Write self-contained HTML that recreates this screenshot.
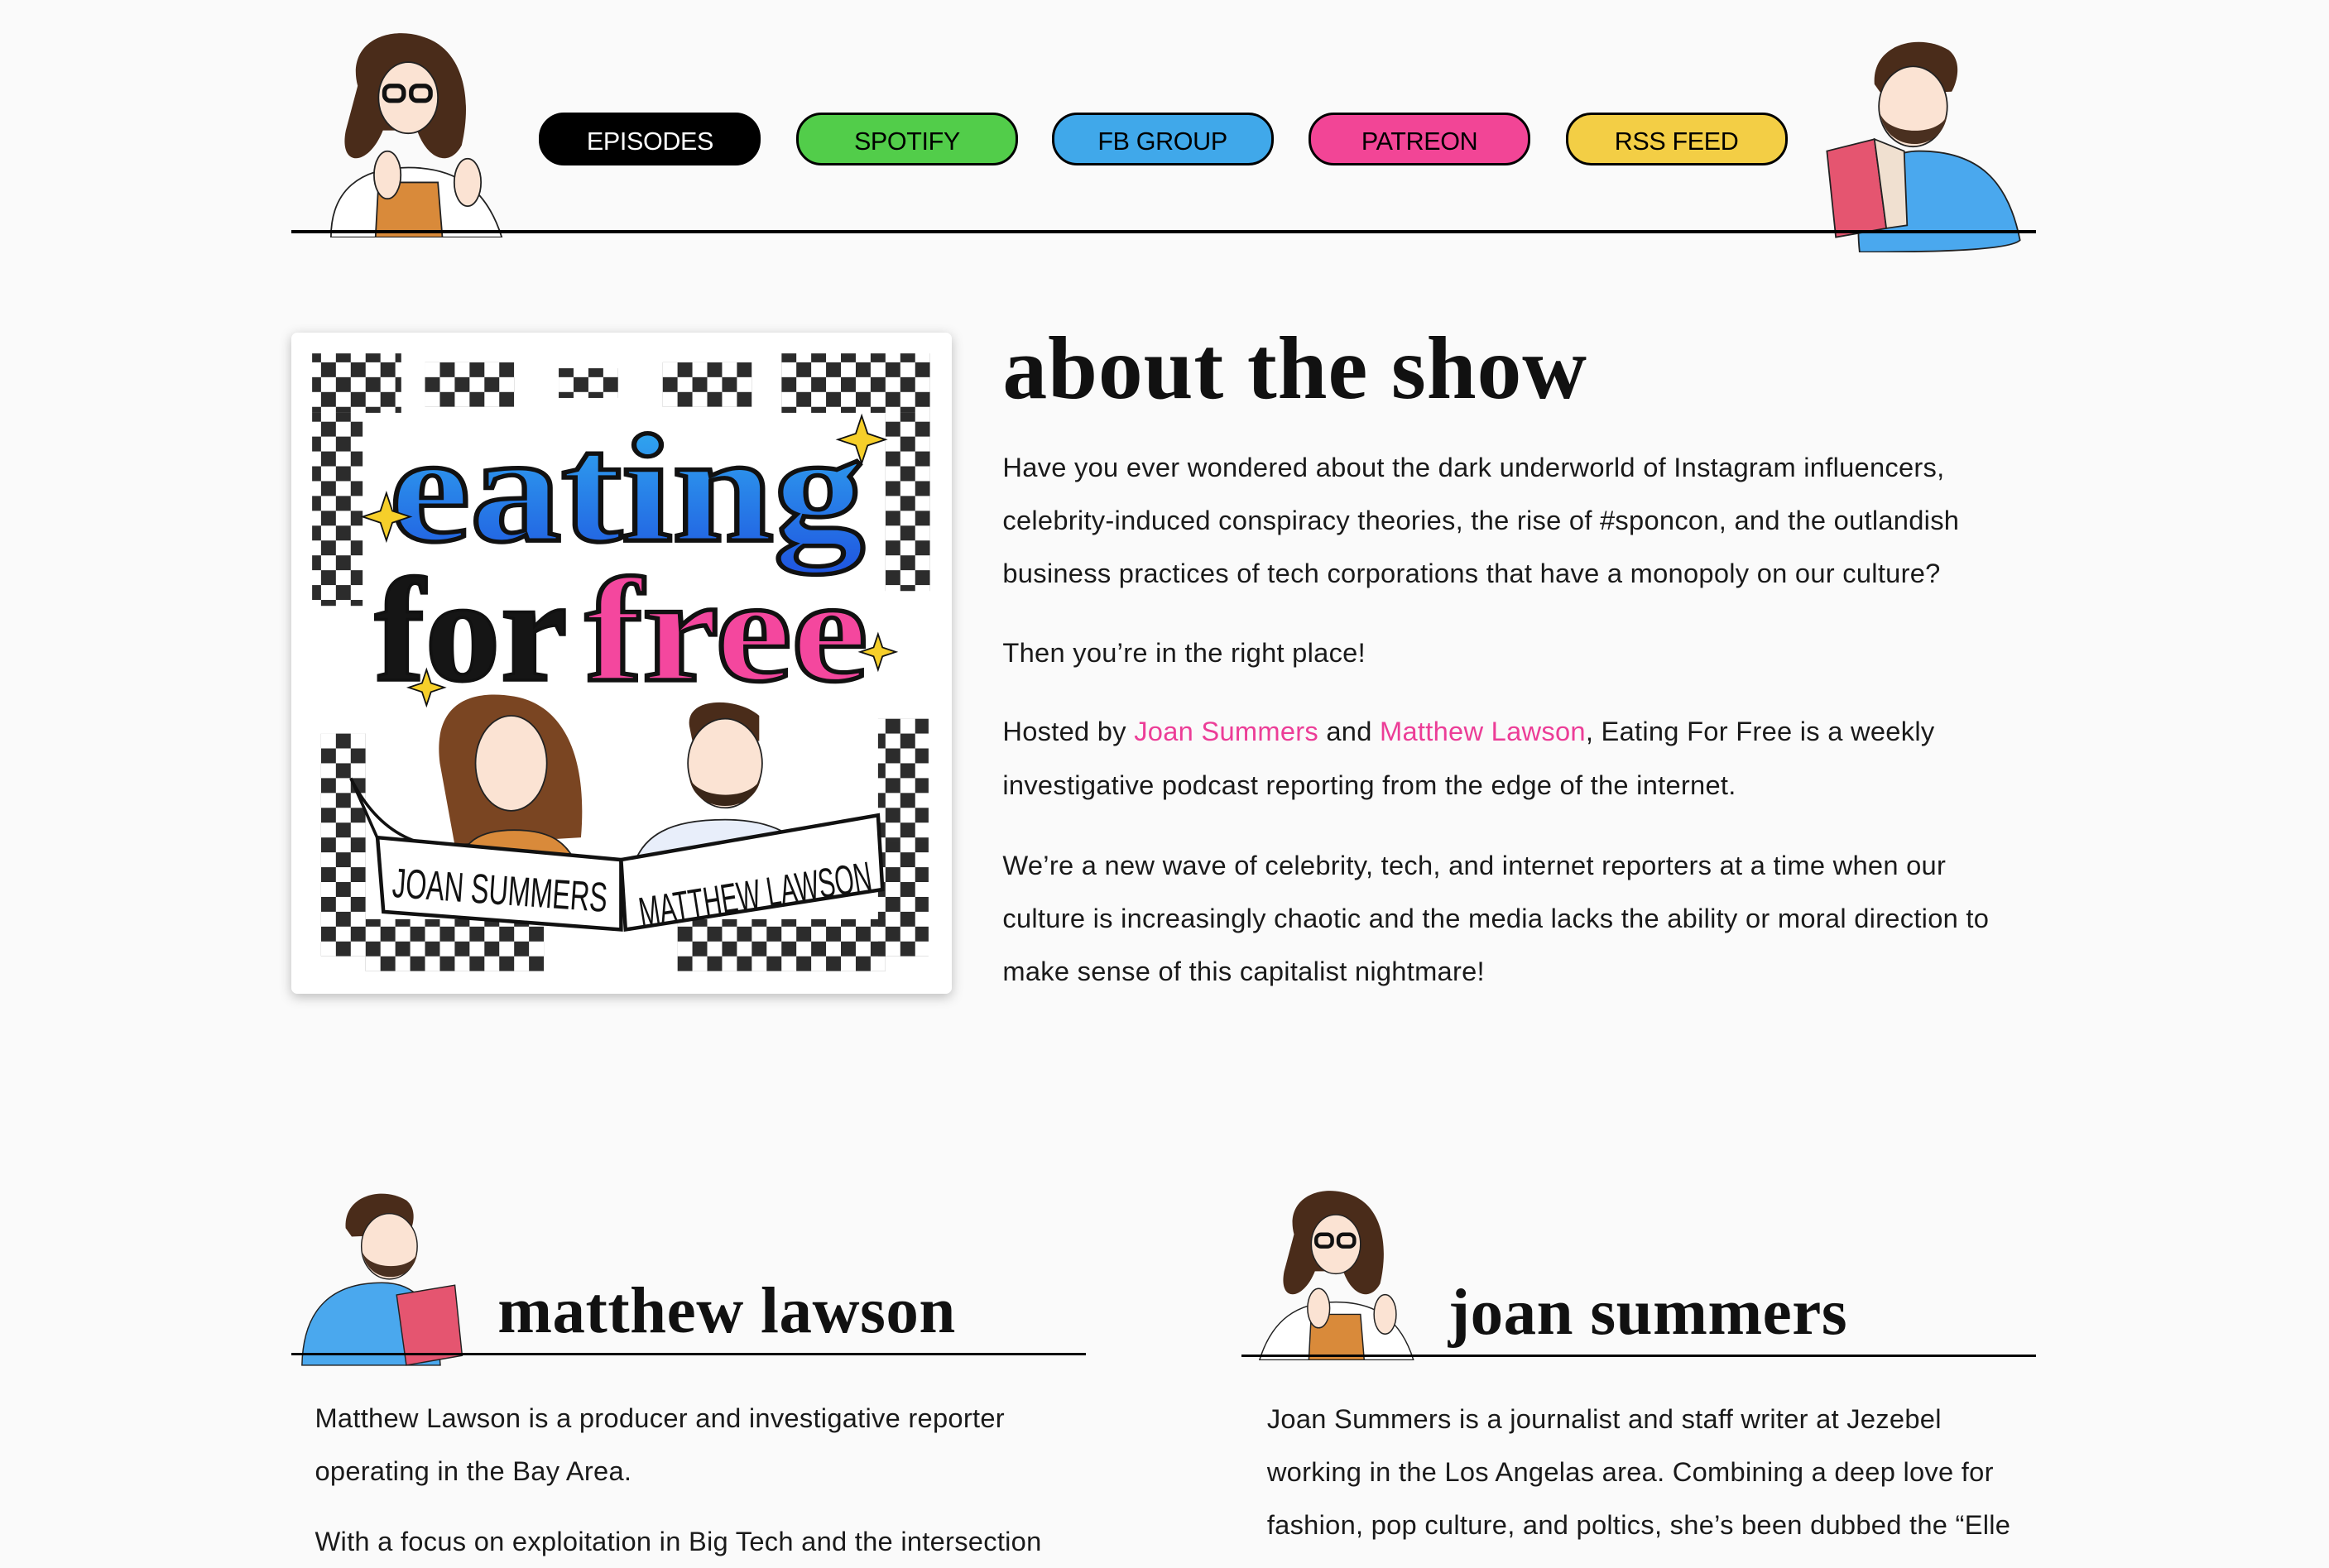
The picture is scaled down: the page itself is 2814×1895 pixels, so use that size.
<!DOCTYPE html>
<html><head><meta charset="utf-8">
<style>
html,body{margin:0;padding:0;background:#fafafa;}
html{zoom:1.79464;}
body{width:1568px;height:1046px;overflow:hidden;position:relative;font-family:"Liberation Sans",sans-serif;color:#111;}
.abs{position:absolute;}
.btn{position:absolute;top:76px;width:146px;height:32px;border:2px solid #000;border-radius:17px;font-size:17px;text-align:center;line-height:36px;color:#000;letter-spacing:-0.2px;}
.line{position:absolute;height:2px;background:#000;}
h1,h2{margin:0;font-family:"Liberation Serif",serif;font-weight:bold;position:absolute;white-space:nowrap;}
.p{position:absolute;font-size:18.2px;letter-spacing:0.15px;line-height:35.7px;white-space:nowrap;color:#1a1a1a;}
.pk{color:#ec3d97;}
</style></head><body>

<!-- top Joan -->
<svg class="abs" style="left:203px;top:18px" width="140" height="142" viewBox="0 0 140 142">
<path d="M38 40 C30 10 60 -2 85 8 C110 18 115 50 108 80 C100 95 85 90 78 70 L55 70 C45 95 25 95 30 70 Z" fill="#4a2c1a"/>
<ellipse cx="72" cy="48" rx="20" ry="24" fill="#fbe3d3" stroke="#222"/>
<rect x="56" y="40" width="13" height="10" rx="4" fill="none" stroke="#111" stroke-width="3"/>
<rect x="74" y="40" width="13" height="10" rx="4" fill="none" stroke="#111" stroke-width="3"/>
<path d="M20 142 C20 110 40 95 72 95 C105 95 125 110 135 142 Z" fill="#fff" stroke="#222"/>
<path d="M52 105 L92 105 L95 142 L50 142 Z" fill="#d98a3a" stroke="#222"/>
<ellipse cx="58" cy="100" rx="9" ry="16" fill="#fbe3d3" stroke="#222"/>
<ellipse cx="112" cy="105" rx="9" ry="16" fill="#fbe3d3" stroke="#222"/>
</svg>
<!-- top Matthew -->
<svg class="abs" style="left:1222px;top:22px" width="142" height="148" viewBox="0 0 142 148">
<path d="M40 35 C38 8 70 0 90 12 C100 20 95 35 92 40 L45 42 Z" fill="#4a2c1a"/>
<ellipse cx="66" cy="50" rx="23" ry="27" fill="#fbe3d3" stroke="#222"/>
<path d="M44 55 C48 82 86 82 89 55 C85 70 50 70 44 55Z" fill="#4a3020"/>
<path d="M30 148 C25 100 45 80 70 80 C110 80 130 100 138 140 C130 148 60 148 30 148Z" fill="#4aa8ee" stroke="#222"/>
<path d="M8 80 L40 72 L48 132 L14 138 Z" fill="#e55570" stroke="#222"/>
<path d="M40 72 L60 80 L62 130 L48 132Z" fill="#f0e0d0" stroke="#222"/>
</svg>

<div class="btn" style="left:363px;background:#000;color:#fff;">EPISODES</div>
<div class="btn" style="left:536px;background:#52cd4a;">SPOTIFY</div>
<div class="btn" style="left:708px;background:#40a8ea;">FB GROUP</div>
<div class="btn" style="left:881px;background:#f24596;">PATREON</div>
<div class="btn" style="left:1054px;background:#f3ce45;">RSS FEED</div>
<div class="line" style="left:196px;width:1175px;top:155px;"></div>

<!-- cover -->
<div class="abs" style="left:196px;top:224px;width:445px;height:445px;background:#fff;border-radius:4px;box-shadow:0 2px 8px rgba(0,0,0,0.25);overflow:hidden;">
<svg width="445" height="445" viewBox="0 0 445 445">
<defs>
<pattern id="ck" width="20" height="20" patternUnits="userSpaceOnUse"><rect width="10" height="10" fill="#151515"/><rect x="10" y="10" width="10" height="10" fill="#151515"/></pattern>
<linearGradient id="bl" x1="0" y1="0" x2="0" y2="1"><stop offset="0" stop-color="#33b4f2"/><stop offset="1" stop-color="#1f55e0"/></linearGradient>
</defs>
<g fill="url(#ck)" opacity="0.9">
<rect x="14" y="14" width="60" height="40"/><rect x="90" y="20" width="60" height="30"/><rect x="180" y="24" width="40" height="20"/>
<rect x="250" y="20" width="60" height="30"/><rect x="330" y="14" width="100" height="40"/>
<rect x="14" y="54" width="34" height="130"/><rect x="400" y="54" width="30" height="120"/>
<rect x="20" y="270" width="30" height="150"/><rect x="395" y="260" width="34" height="160"/>
<rect x="50" y="395" width="120" height="35"/><rect x="260" y="395" width="140" height="35"/>
</g>
<text x="66" y="140" font-family="Liberation Serif,serif" font-weight="bold" font-size="104" fill="url(#bl)" stroke="#111" stroke-width="3" textLength="320" lengthAdjust="spacingAndGlyphs">eating</text>
<text x="56" y="234" font-family="Liberation Serif,serif" font-weight="bold" font-size="100" fill="#151515" stroke="#111" stroke-width="2" textLength="130" lengthAdjust="spacingAndGlyphs">for</text>
<text x="198" y="234" font-family="Liberation Serif,serif" font-weight="bold" font-size="100" fill="#f4479e" stroke="#111" stroke-width="3" textLength="190" lengthAdjust="spacingAndGlyphs">free</text>
<!-- hosts -->
<path d="M100 290 C95 250 120 240 150 245 C180 250 200 280 195 340 L110 345 Z" fill="#7a4522"/>
<ellipse cx="148" cy="290" rx="24" ry="32" fill="#fbe3d3" stroke="#222"/>
<path d="M110 370 C112 340 130 335 150 335 C170 335 190 340 195 370Z" fill="#d98a3a" stroke="#222"/>
<path d="M268 265 C265 245 300 245 315 258 L315 275 L270 275Z" fill="#4a2c1a"/>
<ellipse cx="292" cy="290" rx="25" ry="30" fill="#fbe3d3" stroke="#222"/>
<path d="M268 300 C272 325 312 325 316 300 C310 315 275 315 268 300Z" fill="#3a2618"/>
<path d="M228 370 C232 335 260 328 292 328 C325 328 350 340 355 370Z" fill="#e8eefa" stroke="#222"/>
<path d="M40 300 C60 340 90 350 120 345 L60 345 Z" fill="#fff" stroke="#111" stroke-width="2"/>
<path d="M58 340 L222 355 L222 402 L62 390 Z" fill="#fff" stroke="#111" stroke-width="2.5"/>
<path d="M222 355 L395 325 L398 375 L225 402 Z" fill="#fff" stroke="#111" stroke-width="2.5"/>
<text x="68" y="385" font-family="Liberation Sans,sans-serif" font-size="28" fill="#111" transform="rotate(4 140 375)" textLength="145" lengthAdjust="spacingAndGlyphs">JOAN SUMMERS</text>
<text x="232" y="388" font-family="Liberation Sans,sans-serif" font-size="28" fill="#111" transform="rotate(-9 310 370)" textLength="158" lengthAdjust="spacingAndGlyphs">MATTHEW LAWSON</text>
<g fill="#f6cf2a" stroke="#111" stroke-width="1"><path d="M60 120 l4 -12 l4 12 l12 4 l-12 4 l-4 12 l-4 -12 l-12 -4z"/><path d="M380 68 l4 -12 l4 12 l12 4 l-12 4 l-4 12 l-4 -12 l-12 -4z"/><path d="M88 236 l3 -9 l3 9 l9 3 l-9 3 l-3 9 l-3 -9 l-9 -3z"/><path d="M392 212 l3 -9 l3 9 l9 3 l-9 3 l-3 9 l-3 -9 l-9 -3z"/></g>
</svg>
</div>

<h1 style="left:675px;top:214px;font-size:60px;letter-spacing:0.5px;">about the show</h1>
<div class="p" style="left:675px;top:297px;">Have you ever wondered about the dark underworld of Instagram influencers,<br>celebrity-induced conspiracy theories, the rise of #sponcon, and the outlandish<br>business practices of tech corporations that have a monopoly on our culture?</div>
<div class="p" style="left:675px;top:422px;">Then you’re in the right place!</div>
<div class="p" style="left:675px;top:475px;">Hosted by <span class="pk">Joan Summers</span> and <span class="pk">Matthew Lawson</span>, Eating For Free is a weekly<br>investigative podcast reporting from the edge of the internet.</div>
<div class="p" style="left:675px;top:565px;">We’re a new wave of celebrity, tech, and internet reporters at a time when our<br>culture is increasingly chaotic and the media lacks the ability or moral direction to<br>make sense of this capitalist nightmare!</div>

<!-- bottom Matthew -->
<svg class="abs" style="left:200px;top:798px" width="116" height="122" viewBox="0 0 142 148">
<path d="M40 35 C38 8 70 0 90 12 C100 20 95 35 92 40 L45 42 Z" fill="#4a2c1a"/>
<ellipse cx="76" cy="50" rx="23" ry="27" fill="#fbe3d3" stroke="#222"/>
<path d="M54 55 C58 82 96 82 99 55 C95 70 60 70 54 55Z" fill="#4a3020"/>
<path d="M4 148 C5 100 30 80 70 80 C100 80 115 100 118 148Z" fill="#4aa8ee" stroke="#222"/>
<path d="M82 90 L130 82 L136 140 L90 148 Z" fill="#e55570" stroke="#222"/>
</svg>
<h2 style="left:335px;top:858px;font-size:44px;letter-spacing:0.3px;">matthew lawson</h2>
<div class="line" style="left:196px;width:535px;top:911px;"></div>
<div class="p" style="left:212px;top:937px;">Matthew Lawson is a producer and investigative reporter<br>operating in the Bay Area.<br><div style="height:12px"></div>With a focus on exploitation in Big Tech and the intersection</div>

<!-- bottom Joan -->
<svg class="abs" style="left:840px;top:798px" width="116" height="118" viewBox="0 0 140 142">
<path d="M38 40 C30 10 60 -2 85 8 C110 18 115 50 108 80 C100 95 85 90 78 70 L55 70 C45 95 25 95 30 70 Z" fill="#4a2c1a"/>
<ellipse cx="72" cy="48" rx="20" ry="24" fill="#fbe3d3" stroke="#222"/>
<rect x="56" y="40" width="13" height="10" rx="4" fill="none" stroke="#111" stroke-width="3"/>
<rect x="74" y="40" width="13" height="10" rx="4" fill="none" stroke="#111" stroke-width="3"/>
<path d="M10 142 C20 110 40 95 72 95 C105 95 125 110 135 142 Z" fill="#fff" stroke="#222"/>
<path d="M52 105 L92 105 L95 142 L50 142 Z" fill="#d98a3a" stroke="#222"/>
<ellipse cx="58" cy="100" rx="9" ry="16" fill="#fbe3d3" stroke="#222"/>
<ellipse cx="112" cy="105" rx="9" ry="16" fill="#fbe3d3" stroke="#222"/>
</svg>
<h2 style="left:975px;top:859px;font-size:44px;letter-spacing:0.3px;">joan summers</h2>
<div class="line" style="left:836px;width:535px;top:912px;"></div>
<div class="p" style="left:853px;top:938px;">Joan Summers is a journalist and staff writer at Jezebel<br>working in the Los Angelas area. Combining a deep love for<br>fashion, pop culture, and poltics, she’s been dubbed the “Elle</div>

</body></html>
